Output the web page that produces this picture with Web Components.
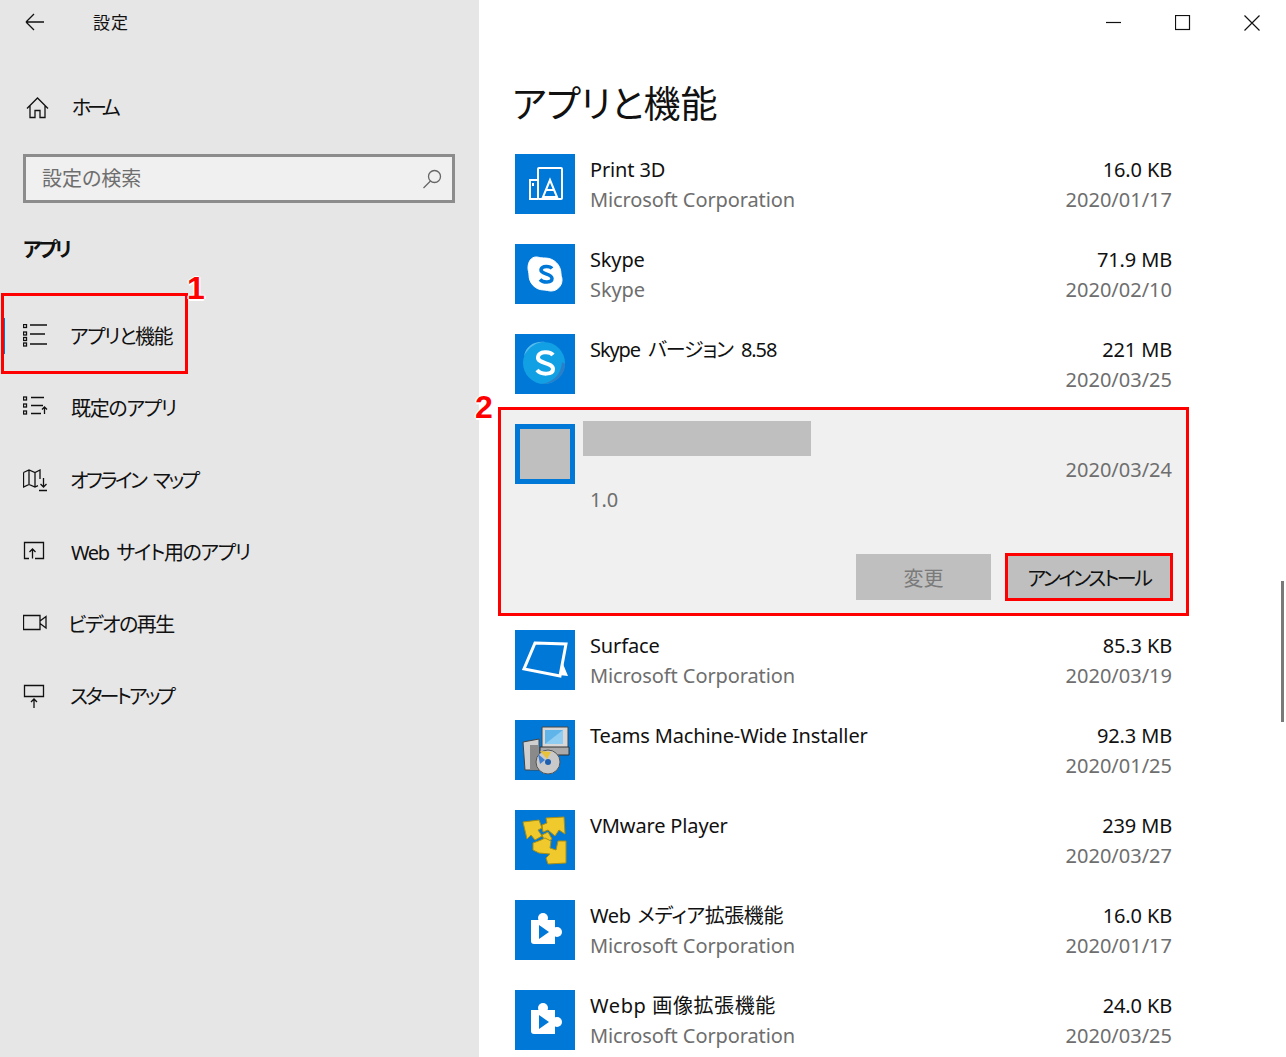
<!DOCTYPE html>
<html lang="ja">
<head>
<meta charset="utf-8">
<title>設定</title>
<style>
  html, body { margin: 0; height: 100%; background: #fff; }
  body {
    font-family: "Noto Sans", "Noto Sans CJK JP", sans-serif;
    font-feature-settings: "palt";
    overflow: hidden;
  }
</style>
</head>
<body>
<settings-app>
  <settings-sidebar slot="side"></settings-sidebar>
  <apps-pane slot="main"></apps-pane>
</settings-app>

<script>
const ICONS = {
  home: '<path d="M1 12.500 11.500 2 22 12.500M4 10v11.500h5V14.500h5V21.500h5V10"/>',
  apps: '<path d="M7 1H24M7 10H22M7 20H24"/><rect x=".5" y=".5" width="3" height="3"/><rect x=".5" y="8" width="3" height="3"/><rect x=".5" y="13.500" width="3" height="3"/><rect x=".5" y="19" width="3" height="3"/>',
  defaults: '<path d="M8 1.500H21M8 9.500H20M8 17.500H18M21.500 18V11M19 13.500l2.500-2.500 2.500 2.500"/><rect x=".5" y="1" width="3" height="3"/><rect x=".5" y="8" width="3" height="3"/><rect x=".5" y="15" width="3" height="3"/>',
  map: '<path d="M.5 4.500 6 2l6 2.500L17 2v9M.5 4.500V19L6 16.500l6 2.500 3-1.300M6 2v14.500M12 4.500V19M20.500 10v9M17.500 16l3 3 3-3M16 22.500h8"/>',
  web: '<path d="M6 18.500H1.500V2.500H20.500V18.500H12M9.500 18.500V9M6.500 12l3-3 3 3"/>',
  video: '<path d="M.5 3.500H17V17.500H.5ZM17 9l6-4.500V16l-6-4.500"/>',
  startup: '<path d="M1.500 1.500H20.500V12.500H1.500ZM11 24V15M8 18l3-3 3 3"/>'
};

const sidebarTemplate = document.createElement('template');
sidebarTemplate.innerHTML = `
  <style>
    :host {
      display: block;
      width: 479px;
      height: 1057px;
      background: #e6e6e6;
      color: #111;
      font-size: 20px;
      overflow: hidden;
    }
    svg { fill: none; stroke: #111; stroke-width: 1.300; display: block; }
    .top {
      display: flex;
      align-items: center;
      height: 43px;
      padding-left: 25px;
    }
    .top svg { margin-right: 49px; }
    .top span { font-size: 17px; letter-spacing: 1px; }
    .home {
      display: flex;
      align-items: center;
      height: 72px;
      margin-top: 28px;
      padding-left: 26px;
    }
    .home svg { margin-right: 23px; }
    .home span { letter-spacing: -4.300px; margin-bottom: 2px; }
    .search {
      display: flex;
      align-items: center;
      justify-content: space-between;
      box-sizing: border-box;
      width: 432px;
      height: 49px;
      margin: 11px 0 0 23px;
      padding: 0 9px 0 16px;
      border: 3px solid #8c8c8c;
      background: #f0f0f0;
      color: #6e6e6e;
    }
    .search span { margin-bottom: 2px; }
    .search svg { stroke: #666; }
    h2 {
      margin: 31px 0 0 23px;
      font-size: 20px;
      line-height: 32px;
      font-weight: 700;
      color: #111;
      letter-spacing: -2.700px;
    }
    nav { margin-top: 34px; }
  </style>
  <div class="top">
    <svg width="19" height="18" viewBox="0 0 19 18"><path d="M1 9H19M1 9l8-8M1 9l8 8"/></svg>
    <span>設定</span>
  </div>
  <div class="home">
    <svg width="23" height="23" viewBox="0 0 23 23">${ICONS.home}</svg>
    <span>ホーム</span>
  </div>
  <div class="search">
    <span>設定の検索</span>
    <svg width="22" height="22" viewBox="0 0 22 22"><circle cx="13.500" cy="8.500" r="6"/><path d="M9.500 13 2.500 20"/></svg>
  </div>
  <h2>アプリ</h2>
  <nav>
    <nav-item icon="apps" active style="--ls:-1.500px;--tx:-1px">アプリと機能</nav-item>
    <nav-item icon="defaults" style="--ls:-1.300px">既定のアプリ</nav-item>
    <nav-item icon="map" style="--ls:-2.500px;--ws:5px;--tx:-1px">オフライン マップ</nav-item>
    <nav-item icon="web" style="--ls:-1.400px;--ws:4px">Web サイト用のアプリ</nav-item>
    <nav-item icon="video" style="--ls:-1.500px;--tx:-3px">ビデオの再生</nav-item>
    <nav-item icon="startup" style="--ls:-2.900px;--tx:-1px">スタートアップ</nav-item>
  </nav>
`;

class SettingsSidebar extends HTMLElement {
  constructor() {
    super();
    this.attachShadow({ mode: 'open' }).appendChild(sidebarTemplate.content.cloneNode(true));
  }
}

class NavItem extends HTMLElement {
  constructor() {
    super();
    const icon = ICONS[this.getAttribute('icon')];
    this.attachShadow({ mode: 'open' }).innerHTML = `
      <style>
        :host {
          display: flex;
          align-items: center;
          height: 72px;
          padding-left: 23px;
          font-size: 20px;
          position: relative;
        }
        :host([active])::before {
          content: "";
          position: absolute;
          left: 3px;
          top: 18px;
          width: 2px;
          height: 36px;
          background: #0078d7;
        }
        svg { fill: none; stroke: #111; stroke-width: 1.300; display: block; margin-right: 23px; flex: none; }
        span { letter-spacing: var(--ls, 0); word-spacing: var(--ws, 0); margin-left: var(--tx, 0); margin-bottom: 2px; }
      </style>
      <svg width="25" height="25" viewBox="0 0 25 25">${icon}</svg>
      <span><slot></slot></span>
    `;
  }
}

class AppIcon extends HTMLElement {
  constructor() {
    super();
    const kind = this.getAttribute('kind');
    const art = {
      print3d: `<g fill="none" stroke="#fff" stroke-width="2"><rect x="23" y="14" width="24" height="31" rx="1"/><path d="M23 26H15V45H23"/><path d="M35 26 42 43H28Z"/><path d="M30 36h10"/></g><rect x="17" y="29" width="2" height="3" fill="#fff"/>`,
      skype: `<path d="M21 13c3 0 4 1 9 1 9 0 16 7 16 16 0 2 1 3 1 6 0 6-5 11-11 11-3 0-4-1-7-1-9 0-15-7-15-15 0-3-1-4-1-7 0-6 3-11 8-11Z" fill="#fff" stroke="#fff"/><path d="M37 24.500c-2-2.500-10-3-11 1-1 5 11 3.500 11 9 0 4.500-9 4.500-12 1" fill="none" stroke="#0078d7" stroke-width="3.500"/>`,
      skype2: `<circle cx="29" cy="29" r="21" fill="#12a0e4"/><path d="M9 22C11 12 19 7 30 8 21 8 14 13 9 22Z" fill="#56bdec"/><path d="M50 30C50 42 40 50 27 50 38 48 46 41 47 28Z" fill="#2a7fc9"/><path d="M38 21c-3-4-14-4-15 2-1 7 15 5 15 12 0 6-12 6-16 1" fill="none" stroke="#fff" stroke-width="4"/>`,
      surface: `<path d="M20 13 51 14 45 46 9 39Z" fill="none" stroke="#fff" stroke-width="3"/><path d="M48 34 53 46 44 45Z" fill="#fff"/>`,
      teams: `<path d="M27 7H53V28H27Z" fill="#d8d8d8" stroke="#444"/><path d="M30 10H48V24H30Z" fill="#5fb4ea"/><path d="M30 24 48 10V24Z" fill="#8fcdf2"/><path d="M25 27H54V35H25Z" fill="#aaa" stroke="#333"/><path d="M8 22 24 19V50H10Z" fill="#cfcfcf" stroke="#444"/><path d="M15 25h8v24h-8Z" fill="#8a8a8a"/><circle cx="33" cy="42" r="12" fill="#c9c9c9" stroke="#555"/><circle cx="33" cy="42" r="3" fill="#1c5fb0"/><path d="M25 31 36 32 32 39Z" fill="#e8c33a"/><path d="M23 34 30 40 25 44Z" fill="#3f7fd0"/>`,
      vmware: `<g fill="#f0c92c" stroke="#a88f10" stroke-width="1"><path d="M8 12 24 10 27 18 23 20 27 26 20 30 16 25 12 29Z"/><path d="M27 15 32 13 31 8 49 7 50 24 44 20 40 26 33 20 28 22Z"/><path d="M27 25 33 22 37 29 31 33Z"/><path d="M18 33 26 30 30 28 36 31 35 38 41 40 43 31 51 31 51 53 33 54 31 48 35 44 24 43 18 40Z"/></g>`,
      ext: `<path d="M16 20H40V44H19a3 3 0 0 1-3-3Z" fill="#fff"/><circle cx="28" cy="18" r="5" fill="#fff"/><circle cx="42" cy="32" r="5" fill="#fff"/><path d="M24 25 34 32 24 39Z" fill="#0078d7"/>`
    }[kind];
    this.attachShadow({ mode: 'open' }).innerHTML = `
      <style>
        :host { display: block; width: 60px; height: 60px; background: #0078d7; flex: none; }
        svg { display: block; }
      </style>
      <svg width="60" height="60" viewBox="0 0 60 60">${art}</svg>
    `;
  }
}

class AppRow extends HTMLElement {
  constructor() {
    super();
    const a = n => this.getAttribute(n) || '';
    this.attachShadow({ mode: 'open' }).innerHTML = `
      <style>
        :host {
          display: grid;
          grid-template-columns: 60px 1fr auto;
          column-gap: 15px;
          align-content: start;
          height: 90px;
          padding: 15px 16px 0;
          box-sizing: border-box;
          font-size: 20px;
          line-height: 32px;
          color: #111;
        }
        app-icon { grid-row: 1 / span 2; }
        .name { letter-spacing: var(--ls, -.15px); word-spacing: var(--ws, 0); }
        .sub { letter-spacing: -.1px; }
        .size { letter-spacing: -.15px; }
        .sub, .date { color: #6e6e6e; }
        .size, .date { text-align: right; }
        .name, .size, .sub, .date { height: 30px; white-space: nowrap; }
      </style>
      <app-icon kind="${a('icon')}"></app-icon>
      <div class="name">${a('name')}</div>
      <div class="size">${a('size')}</div>
      <div class="sub">${a('sub')}</div>
      <div class="date">${a('date')}</div>
    `;
  }
}

class SelectedRow extends HTMLElement {
  constructor() {
    super();
    this.attachShadow({ mode: 'open' }).innerHTML = `
      <style>
        :host {
          display: block;
          height: 206px;
          box-sizing: border-box;
          padding: 15px 16px 0;
          background: #f0f0f0;
          font-size: 20px;
          line-height: 32px;
          color: #6e6e6e;
        }
        .head { display: grid; grid-template-columns: 60px 1fr auto; column-gap: 15px; height: 90px; }
        .ph { width: 60px; height: 60px; box-sizing: border-box; border: 5px solid #0078d7; background: #bfbfbf; }
        .ver { padding-top: 60px; }
        .date { padding-top: 30px; text-align: right; }
        .actions { display: flex; justify-content: flex-end; gap: 15px; margin-top: 40px; }
        button {
          width: 135px;
          height: 46px;
          padding: 0;
          border: 0;
          background: #bfbfbf;
          font: 20px "Noto Sans", "Noto Sans CJK JP", sans-serif;
          font-feature-settings: "palt";
          color: #111;
        }
        button[disabled] { color: #7a7a7a; }
        button.un { width: 166px; letter-spacing: -2.400px; }
      </style>
      <div class="head">
        <div class="ph"></div>
        <div class="ver">1.0</div>
        <div class="date">2020/03/24</div>
      </div>
      <div class="actions">
        <button disabled>変更</button>
        <button class="un">アンインストール</button>
      </div>
    `;
  }
}

const paneTemplate = document.createElement('template');
paneTemplate.innerHTML = `
  <style>
    :host { display: block; height: 1057px; background: #fff; position: relative; overflow: hidden; }
    .bar {
      display: flex;
      justify-content: flex-end;
      height: 45px;
    }
    .bar div { width: 69px; display: flex; align-items: center; justify-content: center; }
    .bar svg { fill: none; stroke: #111; stroke-width: 1.200; display: block; }
    h1 {
      margin: 26px 0 0 33px;
      font-size: 37px;
      line-height: 66px;
      height: 68px;
      font-weight: 400;
      color: #111;
    }
    .list { width: 689px; margin: 0 0 0 20px; }
    .thumb { position: absolute; left: 802px; top: 581px; width: 3px; height: 141px; background: #7a7a7a; }
    .mask { position: absolute; left: 104px; top: 421px; width: 228px; height: 35px; background: #bfbfbf; }
    .mark { position: absolute; border: 3px solid #f00; box-sizing: border-box; }
    .m2 { left: 19px; top: 407px; width: 691px; height: 209px; }
    .m3 { left: 526px; top: 553px; width: 168px; height: 48px; }
  </style>
  <div class="bar">
    <div><svg width="16" height="16" viewBox="0 0 16 16"><path d="M0 7.500H15"/></svg></div>
    <div><svg width="16" height="16" viewBox="0 0 16 16"><rect x=".5" y=".5" width="14" height="14"/></svg></div>
    <div><svg width="16" height="16" viewBox="0 0 16 16"><path d="M.5.5 15.500 15.500M15.500.5 .5 15.500"/></svg></div>
  </div>
  <h1>アプリと機能</h1>
  <div class="list">
    <app-row icon="print3d" name="Print 3D" size="16.0 KB" sub="Microsoft Corporation" date="2020/01/17"></app-row>
    <app-row icon="skype" name="Skype" size="71.9 MB" sub="Skype" date="2020/02/10"></app-row>
    <app-row icon="skype2" name="Skype バージョン 8.58" size="221 MB" date="2020/03/25" style="--ls:-1.100px;--ws:4px"></app-row>
    <selected-row></selected-row>
    <app-row icon="surface" name="Surface" size="85.3 KB" sub="Microsoft Corporation" date="2020/03/19"></app-row>
    <app-row icon="teams" name="Teams Machine-Wide Installer" size="92.3 MB" date="2020/01/25"></app-row>
    <app-row icon="vmware" name="VMware Player" size="239 MB" date="2020/03/27"></app-row>
    <app-row icon="ext" name="Web メディア拡張機能" size="16.0 KB" sub="Microsoft Corporation" date="2020/01/17" style="--ls:-.4px;--ws:2px"></app-row>
    <app-row icon="ext" name="Webp 画像拡張機能" size="24.0 KB" sub="Microsoft Corporation" date="2020/03/25" style="--ls:.6px"></app-row>
  </div>
  <div class="thumb"></div>
  <div class="mask"></div>
  <div class="mark m2"></div>
  <div class="mark m3"></div>
`;

class AppsPane extends HTMLElement {
  constructor() {
    super();
    this.attachShadow({ mode: 'open' }).appendChild(paneTemplate.content.cloneNode(true));
  }
}

// root layout plus the call-outs that lie over both columns
class SettingsApp extends HTMLElement {
  constructor() {
    super();
    this.attachShadow({ mode: 'open' }).innerHTML = `
      <style>
        :host { display: grid; grid-template-columns: 479px 807px; width: 1286px; height: 1057px; position: relative; overflow: hidden; }
        .mark1 { position: absolute; left: 1px; top: 293px; width: 187px; height: 81px; border: 3px solid #f00; box-sizing: border-box; }
        .num {
          position: absolute;
          font: 700 32px "Liberation Sans", sans-serif;
          line-height: 30px;
          color: #f00;
          text-shadow: -1.500px 0 #fff, 1.500px 0 #fff, 0 -1.500px #fff, 0 1.500px #fff;
        }
        .n1 { left: 187px; top: 273px; }
        .n2 { left: 475px; top: 392px; }
      </style>
      <slot name="side"></slot>
      <slot name="main"></slot>
      <div class="mark1"></div>
      <div class="num n1">1</div>
      <div class="num n2">2</div>
    `;
  }
}

customElements.define('nav-item', NavItem);
customElements.define('settings-sidebar', SettingsSidebar);
customElements.define('app-icon', AppIcon);
customElements.define('app-row', AppRow);
customElements.define('selected-row', SelectedRow);
customElements.define('apps-pane', AppsPane);
customElements.define('settings-app', SettingsApp);
</script>
</body>
</html>
